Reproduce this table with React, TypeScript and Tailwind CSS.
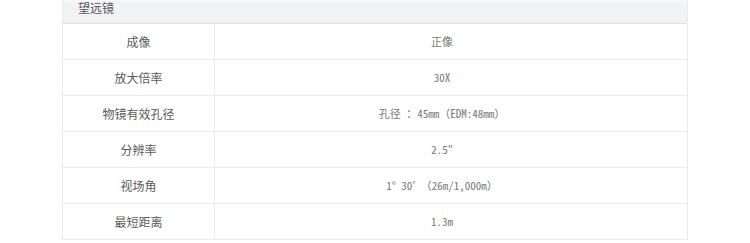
const rows: [string, string][] = [
  ["成像", "正像"],
  ["放大倍率", "30X"],
  ["物镜有效孔径", "孔径 ：45mm（EDM:48mm）"],
  ["分辨率", "2.5″"],
  ["视场角", "1° 30′ （26m/1,000m）"],
  ["最短距离", "1.3m"],
];

export default function App() {
  return (
    <div className="w-[750px] h-[243px] overflow-hidden bg-white font-['Noto_Sans_CJK_SC',sans-serif]">
      <div className="ml-[62px] w-[626px] border-x border-[#ebebeb]">
        <div className="h-[24px] bg-[#f2f3f5] border-t border-[#fafafa] border-b border-b-[#e2e2e2] pl-[15px] text-[12px] leading-[14px] text-[#555]">
          望远镜
        </div>
        {rows.map(([label, value]) => (
          <div key={label} className="flex h-[36px] border-b border-[#ebebeb] text-[12px] text-[#5a5a5a]">
            <div className="w-[152px] shrink-0 border-r border-[#ebebeb] flex items-center justify-center">
              {label}
            </div>
            <div className="flex-1 flex items-center justify-center pr-[18px] font-['Noto_Sans_Mono_CJK_SC','Liberation_Mono',monospace] text-[11px] text-[#777]">
              {value}
            </div>
          </div>
        ))}
      </div>
    </div>
  );
}
